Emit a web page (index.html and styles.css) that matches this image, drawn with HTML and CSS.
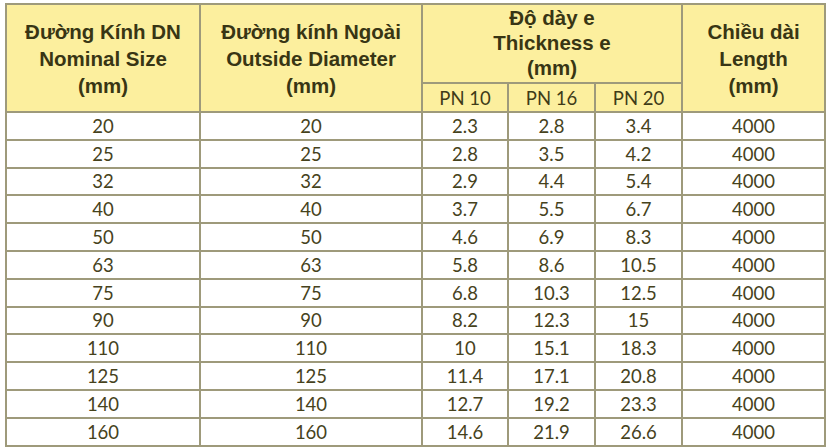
FILE: index.html
```html
<!DOCTYPE html>
<html lang="vi">
<head>
<meta charset="utf-8">
<title>Bảng kích thước ống</title>
<link rel="stylesheet" href="styles.css">
</head>
<body>
<table class="spec">
  <colgroup>
    <col class="c1"><col class="c2"><col class="c3"><col class="c4"><col class="c5"><col class="c6">
  </colgroup>
  <thead>
    <tr class="h1">
      <th rowspan="2">Đường Kính DN<br>Nominal Size<br>(mm)</th>
      <th rowspan="2">Đường kính Ngoài<br>Outside Diameter<br>(mm)</th>
      <th colspan="3" class="group">Độ dày e<br>Thickness e<br>(mm)</th>
      <th rowspan="2">Chiều dài<br>Length<br>(mm)</th>
    </tr>
    <tr class="h2">
      <th class="pn">PN 10</th>
      <th class="pn">PN 16</th>
      <th class="pn">PN 20</th>
    </tr>
  </thead>
  <tbody>
    <tr><td>20</td><td>20</td><td>2.3</td><td>2.8</td><td>3.4</td><td>4000</td></tr>
    <tr><td>25</td><td>25</td><td>2.8</td><td>3.5</td><td>4.2</td><td>4000</td></tr>
    <tr><td>32</td><td>32</td><td>2.9</td><td>4.4</td><td>5.4</td><td>4000</td></tr>
    <tr><td>40</td><td>40</td><td>3.7</td><td>5.5</td><td>6.7</td><td>4000</td></tr>
    <tr><td>50</td><td>50</td><td>4.6</td><td>6.9</td><td>8.3</td><td>4000</td></tr>
    <tr><td>63</td><td>63</td><td>5.8</td><td>8.6</td><td>10.5</td><td>4000</td></tr>
    <tr><td>75</td><td>75</td><td>6.8</td><td>10.3</td><td>12.5</td><td>4000</td></tr>
    <tr><td>90</td><td>90</td><td>8.2</td><td>12.3</td><td>15</td><td>4000</td></tr>
    <tr><td>110</td><td>110</td><td>10</td><td>15.1</td><td>18.3</td><td>4000</td></tr>
    <tr><td>125</td><td>125</td><td>11.4</td><td>17.1</td><td>20.8</td><td>4000</td></tr>
    <tr><td>140</td><td>140</td><td>12.7</td><td>19.2</td><td>23.3</td><td>4000</td></tr>
    <tr><td>160</td><td>160</td><td>14.6</td><td>21.9</td><td>26.6</td><td>4000</td></tr>
  </tbody>
</table>
</body>
</html>
```

FILE: styles.css
```css
html, body {
  margin: 0;
  padding: 0;
  background: #ffffff;
}

body {
  padding: 3px 0 0 5px;
}

.spec {
  border-collapse: collapse;
  table-layout: fixed;
  width: 819px;
  font-family: Lato, "Open Sans", sans-serif;
  color: #46421c;
}

.c1 { width: 194px; }
.c2 { width: 222px; }
.c3 { width: 86px; }
.c4 { width: 87px; }
.c5 { width: 87px; }
.c6 { width: 143px; }

.spec th,
.spec td {
  border: 2px solid #9e9a7b;
  padding: 0;
  text-align: center;
  vertical-align: middle;
}

.spec th {
  background: #fcef9e;
  font-family: "Liberation Sans", Arial, sans-serif;
  font-weight: bold;
  font-size: 20.5px;
  line-height: 27px;
  color: #383514;
}

.spec .h1 {
  height: 79px;
}

.spec th.group {
  line-height: 25px;
  padding-bottom: 2px;
}

.spec .h2 {
  height: 29px;
}

.spec th.pn {
  font-family: Lato, "Open Sans", sans-serif;
  font-weight: normal;
  font-size: 18.5px;
  line-height: 22px;
  color: #3e3b18;
}

.spec tbody tr {
  height: 27.8px;
}

.spec td {
  font-size: 18.5px;
  line-height: 22px;
}
```
